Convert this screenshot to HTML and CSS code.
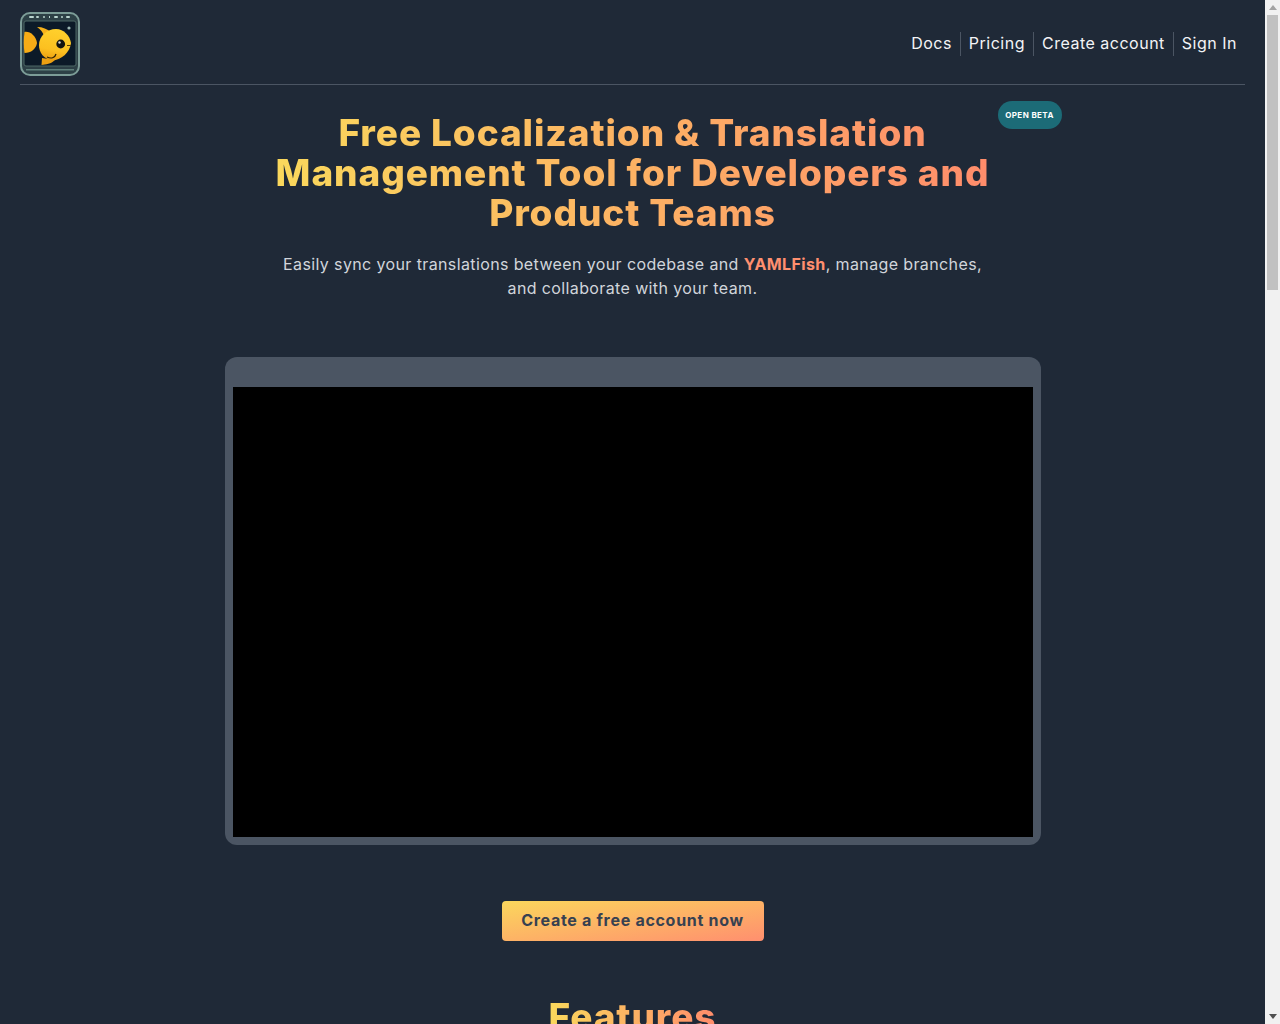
FILE: index.html
```html
<!DOCTYPE html>
<html lang="en">
<head>
    <meta charset="UTF-8">
    <meta name="viewport" content="width=device-width, initial-scale=1.0">
    <title>YAMLFish</title>
    <link rel="stylesheet" href="styles.css">
</head>
<body>
    <header class="site-header">
        <a class="logo" href="#">
            <svg width="60" height="64" viewBox="0 0 60 64">
                <defs>
                    <linearGradient id="fish-body" x1="0.5" y1="0" x2="0.3" y2="1">
                        <stop offset="0" stop-color="#ffd02c"/>
                        <stop offset="0.65" stop-color="#fcc020"/>
                        <stop offset="1" stop-color="#ea9c10"/>
                    </linearGradient>
                </defs>
                <rect x="1" y="1" width="58" height="62" rx="9" fill="#2d4046" stroke="#7c9c97" stroke-width="2"/>
                <g fill="#b9d3ce">
                    <rect x="9" y="4" width="5" height="2" rx="1"/>
                    <rect x="16" y="4" width="3" height="2" rx="1"/>
                    <rect x="23" y="4" width="2" height="2" rx="1"/>
                    <rect x="29" y="4" width="1" height="2"/>
                    <rect x="34" y="4" width="4" height="2" rx="1"/>
                    <rect x="41" y="4" width="2" height="2" rx="1"/>
                    <rect x="46" y="4" width="4" height="2" rx="1"/>
                </g>
                <rect x="4" y="9" width="52" height="45" rx="2" fill="#0c1a28" stroke="#4c6664"/>
                <rect x="6" y="57" width="48" height="1.5" fill="#5f7f7a"/>
                <circle cx="49" cy="16" r="1.6" fill="#9db8b4"/>
                <path d="M4.5 20 C10 19 16 24 17 31 C16 37 11 41 4.5 41 C3.5 34 3.5 27 4.5 20Z" fill="#f7ac16"/>
                <path d="M17 15 C23 15 27 17 31 20 L24 24 C23 20 20 17 17 15Z" fill="#f7b21a"/>
                <path d="M22 46 L35 48 C31 52 26 52.5 21.5 53Z" fill="#eda012"/>
                <path d="M19 33 C19 24 27 17 36 17 C44 17 50 24 51 31 C50 40 42 48 32 48.5 C24 47 19 41 19 33Z" fill="url(#fish-body)"/>
                <path d="M36 42 C35 46 31 47 27 45" fill="none" stroke="#2a2008" stroke-width="1.2"/>
                <circle cx="40.7" cy="32" r="4.4" fill="#14140f"/>
                <circle cx="39.5" cy="30.5" r="1.2" fill="#d8d8d0"/>
                <rect x="47" y="33" width="4" height="1" fill="#5a3d08"/>
            </svg>
        </a>
        <nav class="site-nav">
            <a href="#">Docs</a>
            <a href="#">Pricing</a>
            <a href="#">Create account</a>
            <a href="#">Sign In</a>
        </nav>
    </header>

    <main>
        <section class="hero">
            <span class="badge">Open Beta</span>
            <h1 class="gradient-text">Free Localization &amp; Translation Management Tool for Developers and Product Teams</h1>
            <p class="lead">Easily sync your translations between your codebase and <strong>YAMLFish</strong>, manage branches, and collaborate with your team.</p>
        </section>

        <div class="video-frame">
            <div class="video-bar"></div>
            <div class="video"></div>
        </div>

        <a class="cta" href="#">Create a free account now</a>

        <section class="features">
            <h2 class="gradient-text">Features</h2>
        </section>
    </main>

    <div class="scrollbar">
        <span class="arrow-up"></span>
        <span class="thumb"></span>
        <span class="arrow-down"></span>
    </div>
</body>
</html>
```

FILE: styles.css
```css
body {
    margin: 0 15px 0 0;
    background: #1f2937;
    color: #fff;
    font-family: Inter, "Open Sans", sans-serif;
}

a {
    color: inherit;
    text-decoration: none;
}

.site-header {
    display: flex;
    justify-content: space-between;
    align-items: center;
    margin: 0 20px;
    height: 80px;
    padding-top: 4px;
    border-bottom: 1px solid #4b5563;
}

.logo {
    display: flex;
}

.site-nav {
    display: flex;
}

.site-nav a {
    padding: 0 8px 2px;
    line-height: 22px;
    font-size: 16px;
    letter-spacing: 0.5px;
    color: #f3f4f6;
    border-left: 1px solid #4b5563;
}

.site-nav a:first-child {
    border-left: none;
}

main {
    display: flex;
    flex-direction: column;
    align-items: center;
}

.hero {
    position: relative;
    width: 860px;
    padding-top: 28px;
    text-align: center;
}

.badge {
    position: absolute;
    top: 16px;
    right: 1px;
    width: 64px;
    line-height: 28px;
    border-radius: 14px;
    background: #1c6b77;
    font-size: 8px;
    font-weight: 700;
    letter-spacing: 0.4px;
    text-transform: uppercase;
}

.gradient-text {
    margin: 0;
    font-size: 37px;
    font-weight: 800;
    line-height: 40px;
    letter-spacing: 0.9px;
    background: linear-gradient(90deg, #fad85c, #ff8c6b);
    -webkit-background-clip: text;
    background-clip: text;
    color: transparent;
}

h1.gradient-text {
    width: 716px;
    margin: 0 auto;
}

h2.gradient-text {
    display: inline-block;
}

.lead {
    width: 710px;
    margin: 19px auto 0;
    font-size: 16px;
    line-height: 24px;
    letter-spacing: 0.38px;
    color: #d1d5db;
}

.lead strong {
    color: #ff8f6f;
}

.video-frame {
    margin-top: 57px;
    padding: 0 8px 8px;
    width: 800px;
    background: #4b5563;
    border-radius: 12px;
}

.video-bar {
    height: 30px;
}

.video {
    height: 450px;
    background: #000;
}

.cta {
    margin-top: 56px;
    width: 262px;
    padding-bottom: 1px;
    text-align: center;
    line-height: 39px;
    border-radius: 4px;
    background: linear-gradient(to bottom right, #fbd75c, #ff8f6f);
    color: #374151;
    font-weight: 700;
    font-size: 16px;
    letter-spacing: 0.7px;
}

.features {
    margin-top: 56px;
    min-height: 200px;
    text-align: center;
}

.scrollbar {
    position: fixed;
    top: 0;
    right: 0;
    bottom: 0;
    width: 15px;
    background: #f1f1f1;
}

.thumb {
    position: absolute;
    top: 15px;
    left: 2px;
    width: 11px;
    height: 275px;
    background: #c1c1c1;
}

.arrow-up,
.arrow-down {
    position: absolute;
    left: 4px;
    width: 0;
    height: 0;
    border-left: 4px solid transparent;
    border-right: 4px solid transparent;
}

.arrow-up {
    top: 5px;
    border-bottom: 5px solid #a3a3a3;
}

.arrow-down {
    bottom: 5px;
    border-top: 5px solid #505050;
}
```
